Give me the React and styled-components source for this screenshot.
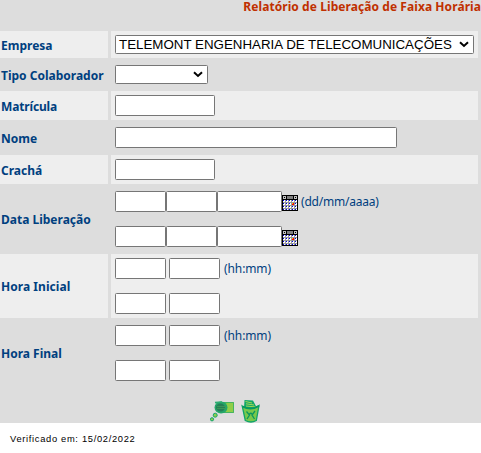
import React from 'react';
import styled, { createGlobalStyle } from 'styled-components';

const Global = createGlobalStyle`
  body { margin: 0; background: #fff; }
  * { box-sizing: border-box; }
`;

const Page = styled.main`
  width: 481px;
  height: 453px;
  font-family: 'Noto Sans', sans-serif;
  font-size: 12px;
  color: #003f7f;
`;

const Panel = styled.form`
  height: 423px;
  background: #dddddd;
`;

const Title = styled.h1`
  margin: 0;
  height: 31px;
  font-size: 12px;
  line-height: 13px;
  font-weight: 700;
  color: #c03000;
  text-align: right;
  white-space: nowrap;
  letter-spacing: 0.07px;
`;

const Rows = styled.div`
  display: grid;
  gap: 3px;
  padding-right: 3px;
`;

const Row = styled.div`
  display: grid;
  grid-template-columns: 108px 367px;
  gap: 3px;
  height: ${(p) => p.$height}px;
`;

const Label = styled.label`
  display: flex;
  align-items: center;
  padding: 1px 0 0 1px;
  font-weight: 700;
  white-space: nowrap;
  letter-spacing: ${(p) => p.$spacing || 0}px;
  background: ${(p) => (p.$light ? '#eeeeee' : 'transparent')};
`;

const Cell = styled.div`
  display: flex;
  flex-direction: column;
  gap: 14px;
  padding: 4px;
  background: ${(p) => (p.$light ? '#eeeeee' : 'transparent')};
`;

const Line = styled.div`
  display: flex;
  gap: ${(p) => p.$gap || 0}px;
  height: 21px;
`;

const Input = styled.input`
  width: ${(p) => p.$width}px;
  height: 21px;
  margin: 0;
  padding: 1px 2px;
  border: 1px solid #767676;
  border-radius: 1.4px;
  background: #fff;
  outline: none;
`;

const Select = styled.button`
  display: flex;
  align-items: center;
  justify-content: space-between;
  width: ${(p) => p.$width}px;
  height: 19px;
  padding: 0 4px 0 3px;
  border: 1px solid #767676;
  border-radius: 1.4px;
  background: #fff;
  color: #000;
  font: 13.333px/17px 'Liberation Sans', sans-serif;
  white-space: nowrap;
`;

const Arrow = styled.svg`
  flex: none;
  width: 10px;
  height: 7px;
  margin-left: auto;
`;

const Hint = styled.span`
  margin-left: ${(p) => p.$left}px;
  line-height: 21px;
  white-space: nowrap;
  letter-spacing: ${(p) => p.$spacing || 0}px;
`;

const CalendarSvg = styled.svg`
  flex: none;
  width: 16px;
  height: 16px;
  margin-top: 4px;
`;

const Actions = styled.div`
  display: flex;
  gap: 7px;
  padding: 14px 0 0 210px;
`;

const ActionSvg = styled.svg`
  display: block;
  width: ${(p) => p.$width}px;
  height: 24px;
`;

const Footer = styled.footer`
  padding: 10px 0 0 10px;
  color: #000;
  font: 9.333px/12px 'Liberation Sans', sans-serif;
  letter-spacing: 0.68px;
`;

function Dropdown({ width, children }) {
  return (
    <Select type="button" $width={width}>
      {children}
      <Arrow viewBox="0 0 10 7">
        <path d="M1 1.3 L5 5 L9 1.3" fill="none" stroke="#000" strokeWidth="2" />
      </Arrow>
    </Select>
  );
}

function Calendar() {
  const cells = [];
  for (let r = 0; r < 4; r++) {
    for (let c = 0; c < 5; c++) {
      const h = r === 3 ? 1 : 2;
      cells.push(
        <g key={`${r}-${c}`}>
          <rect x={1 + c * 3} y={5 + r * 3} width="2" height={h} fill="#fff" />
          <rect x={1 + c * 3} y={5 + r * 3} width="1" height="1" fill="#0000e0" />
        </g>
      );
    }
  }
  return (
    <CalendarSvg viewBox="0 0 16 16" shapeRendering="crispEdges">
      <rect width="16" height="16" fill="#000" />
      <rect x="1" y="5" width="14" height="10" fill="#999" />
      <rect x="1" y="1" width="3" height="3" fill="#c0c0c0" />
      <rect x="2" y="2" width="1" height="1" fill="#000" />
      <rect x="5" y="1" width="6" height="3" fill="#808080" />
      <rect x="12" y="1" width="3" height="3" fill="#c0c0c0" />
      <rect x="13" y="2" width="1" height="1" fill="#000" />
      {cells}
      <rect x="10" y="8" width="2" height="2" fill="#f00" />
      <rect x="10" y="8" width="1" height="1" fill="#fc0" />
    </CalendarSvg>
  );
}

function SearchIcon() {
  return (
    <ActionSvg $width={24} viewBox="0 0 24 24">
      <path d="M13 3 H24 V14 H13 Z" fill="#8fce48" />
      <path d="M13 3.5 H23.5 V13.5 H13" fill="none" stroke="#45b462" />
      <ellipse cx="11" cy="8.5" rx="6.5" ry="6" fill="#24a66a" />
      <ellipse cx="10.5" cy="8.5" rx="4.5" ry="4" fill="#267f57" />
      <path d="M7 7.5h9M7 9.5h9" stroke="#3a9858" />
      <path d="M5 3.5 L12 3" stroke="#2dad72" strokeWidth="1.5" />
      <circle cx="5.2" cy="16.2" r="2" fill="#8fce48" stroke="#15a56c" />
      <circle cx="2" cy="20.3" r="1.6" fill="#8fce48" stroke="#15a56c" />
    </ActionSvg>
  );
}

function TrashIcon() {
  return (
    <ActionSvg $width={20} viewBox="0 0 20 24">
      <path d="M3 9 L3.5 1 L12 1.5 L16 9Z" fill="#12a767" />
      <path d="M4.5 2.5 L11 4 M5 4.8 L13 6 M5 7 L15 8" stroke="#a4d655" />
      <path d="M1.2 7 Q9 12 18 6.5 L15.3 21.5 Q10 24.5 4.3 21.5 Z" fill="#79c94b" stroke="#10a469" strokeWidth="1.3" />
      <path d="M1.5 7.5 Q10 12 18 7" fill="none" stroke="#079861" strokeWidth="1.6" />
      <path d="M5.5 12.5 L8.5 16 L6 20 M14 12 L11 16 L13.5 20 M8.5 15 Q10 13.5 11 15" fill="none" stroke="#0c965f" strokeWidth="1.3" />
    </ActionSvg>
  );
}

function Field({ label, light, height, spacing, children }) {
  return (
    <Row $height={height}>
      <Label $light={light} $spacing={spacing}>{label}</Label>
      <Cell $light={light}>{children}</Cell>
    </Row>
  );
}

function DateLine({ hint }) {
  return (
    <Line>
      <Input $width={51} />
      <Input $width={51} />
      <Input $width={65} />
      <Calendar />
      {hint && <Hint $left={3} $spacing={-0.22}>{hint}</Hint>}
    </Line>
  );
}

function TimeLine({ hint }) {
  return (
    <Line $gap={3}>
      <Input $width={51} />
      <Input $width={51} />
      {hint && <Hint $left={1} $spacing={-0.1}>{hint}</Hint>}
    </Line>
  );
}

export default function App() {
  return (
    <Page>
      <Global />
      <Panel>
        <Title>Relatório de Liberação de Faixa Horária</Title>
        <Rows>
          <Field label="Empresa" light height={27}>
            <Dropdown width={359}>TELEMONT ENGENHARIA DE TELECOMUNICAÇÕES</Dropdown>
          </Field>
          <Field label="Tipo Colaborador" height={27}>
            <Dropdown width={93} />
          </Field>
          <Field label="Matrícula" light height={29} spacing={-0.15}><Input $width={100} /></Field>
          <Field label="Nome" height={29}><Input $width={282} /></Field>
          <Field label="Crachá" light height={29}><Input $width={100} /></Field>
          <Field label="Data Liberação" height={64}>
            <DateLine hint="(dd/mm/aaaa)" />
            <DateLine />
          </Field>
          <Field label="Hora Inicial" light height={64} spacing={0.05}>
            <TimeLine hint="(hh:mm)" />
            <TimeLine />
          </Field>
          <Field label="Hora Final" height={64}>
            <TimeLine hint="(hh:mm)" />
            <TimeLine />
          </Field>
        </Rows>
        <Actions>
          <SearchIcon />
          <TrashIcon />
        </Actions>
      </Panel>
      <Footer>Verificado em: 15/02/2022</Footer>
    </Page>
  );
}
